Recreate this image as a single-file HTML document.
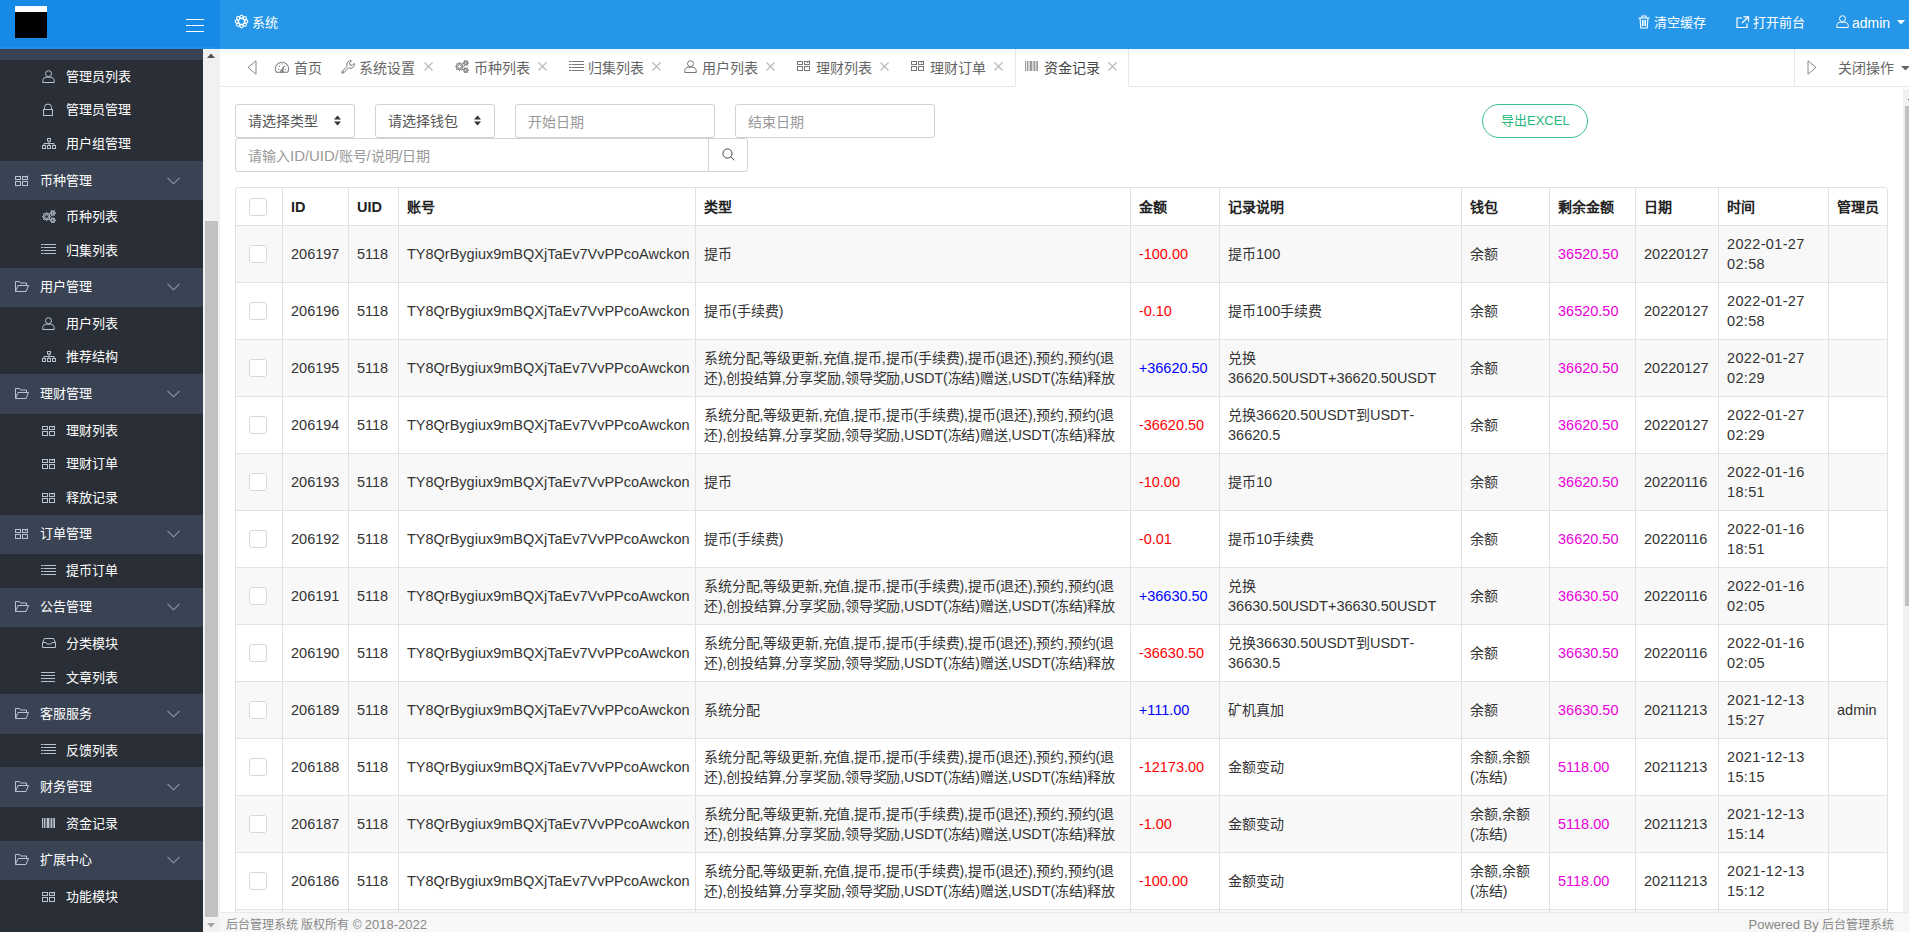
<!DOCTYPE html>
<html lang="zh-CN">
<head>
<meta charset="utf-8">
<style>
*{box-sizing:border-box;margin:0;padding:0}
html,body{width:1909px;height:932px;overflow:hidden;background:#fff;font-family:"Liberation Sans",sans-serif;color:#333}
.abs{position:absolute}
svg.abs{overflow:visible}
.t{position:absolute;white-space:nowrap}
#hl{position:absolute;left:0;top:0;width:220px;height:49px;background:#178ae8}
#hr{position:absolute;left:220px;top:0;width:1689px;height:49px;background:#2697e8}
#logo{position:absolute;left:15px;top:6px;width:32px;height:32px;background:#000;border-top:6px solid #fff}
.hb{position:absolute;left:186px;width:18px;height:1.6px;background:#fff}
#side{position:absolute;left:0;top:49px;width:203px;height:883px;background:#2a2f37}
.grp{position:absolute;left:0;width:203px;height:39.5px;background:#3a4354}
.sd{color:#fff;font-size:13px;line-height:16px}
#ss{position:absolute;left:203px;top:49px;width:17px;height:883px;background:#f1f1f1}
#tabs{position:absolute;left:220px;top:49px;width:1689px;height:38px;background:#fff;border-bottom:1px solid #e6e6e6}
.tb{font-size:14px;color:#666;line-height:16px}
.tx{font-size:15px;color:#bbb;line-height:16px}
#ms{position:absolute;left:1903px;top:89px;width:6px;height:823px;background:#f1f1f1}
#foot{position:absolute;left:220px;top:912px;width:1689px;height:20px;background:#f7f7f7;border-top:1px solid #e9e9e9}
.ft{color:#888;font-size:12px;line-height:14px}
.inp{position:absolute;height:34px;border:1px solid #d2d2d2;border-radius:3px;background:#fff}
.ph{font-size:14px;color:#999;line-height:16px}
.sel{font-size:14px;color:#555;line-height:16px}
#tbl{position:absolute;left:235px;top:187px;width:1653px;height:740px;border-left:1px solid #e2e2e2;border-top:1px solid #e2e2e2;border-top-left-radius:3px;border-top-right-radius:3px;overflow:hidden}
.row{position:absolute;left:0;width:1652px}
.c{position:absolute;top:0;height:100%;border-right:1px solid #e2e2e2;border-bottom:1px solid #e2e2e2}
.cb{position:absolute;width:18px;height:18px;border:1px solid #d8d8d8;border-radius:3px;background:#fff}
.tt{position:absolute;white-space:nowrap;font-size:14px;line-height:20px;color:#333}
.th{font-weight:bold;color:#222}
.lt{letter-spacing:-0.12px}
.dt{letter-spacing:0.35px}
.red{color:#f00}
.blue{color:#00f}
.mag{color:#ec00dc}
</style>
</head>
<body>
<div id="hl">
  <div id="logo"></div>
  <div class="abs" style="left:0;top:47px;width:220px;height:2px;background:#2390e8"></div>
  <div class="hb" style="top:18.5px"></div>
  <div class="hb" style="top:24.5px"></div>
  <div class="hb" style="top:30.5px"></div>
</div>
<div id="hr"></div>
<div id="side"></div>

<div class="grp" style="top:49px;height:11px"></div>
<div class="t sd" style="left:66px;top:68.80px">管理员列表</div>
<svg class="abs" style="left:42px;top:70px" width="13" height="13" viewBox="0 0 13 13" fill="none" stroke="#b8c2d0" stroke-width="1" ><circle cx="6.5" cy="3.7" r="3"/><path d="M0.8 12.5V10.6C0.8 8.6 2.6 7.2 4.3 7.2H8.7C10.4 7.2 12.2 8.6 12.2 10.6V12.5Z"/></svg>
<div class="t sd" style="left:66px;top:102.40px">管理员管理</div>
<svg class="abs" style="left:42px;top:103px" width="12" height="13" viewBox="0 0 12 13" fill="none" stroke="#b8c2d0" stroke-width="1" ><path d="M2.5 6.5V4.5a3.5 3.5 0 0 1 7 0V6.5"/><rect x="1.5" y="6.5" width="9" height="6"/></svg>
<div class="t sd" style="left:66px;top:136.00px">用户组管理</div>
<svg class="abs" style="left:42px;top:138px" width="14" height="11" viewBox="0 0 14 11" fill="none" stroke="#b8c2d0" stroke-width="1" ><rect x="5.5" y="0.5" width="3" height="2.5"/><path d="M7 3V5.5M2 7.5V5.5H12V7.5M7 5.5V7.5"/><rect x="0.5" y="7.5" width="3" height="3"/><rect x="5.5" y="7.5" width="3" height="3"/><rect x="10.5" y="7.5" width="3" height="3"/></svg>
<div class="grp" style="top:160.80px"></div>
<div class="t sd" style="left:40px;top:172.55px">币种管理</div>
<svg class="abs" style="left:15px;top:175px" width="14" height="11" viewBox="0 0 14 11" fill="none" stroke="#b8c2d0" stroke-width="1" ><rect x="0.5" y="1.5" width="5" height="3"/><rect x="7.5" y="1.5" width="5" height="3"/><rect x="0.5" y="6.5" width="5" height="4"/><rect x="7.5" y="6.5" width="5" height="4"/><path d="M10 3L12.5 0.8"/></svg>
<svg class="abs" style="left:167px;top:177px" width="13" height="8" viewBox="0 0 13 8" fill="none" stroke="#8f98a8" stroke-width="1.1" ><path d="M0.5 0.8L6.5 6.8L12.5 0.8"/></svg>
<div class="t sd" style="left:66px;top:209.10px">币种列表</div>
<svg class="abs" style="left:42px;top:210px" width="15" height="13" viewBox="0 0 15 13" fill="none" stroke="#b8c2d0" stroke-width="1" color="#b8c2d0"><circle cx="4.6" cy="6.6" r="1.89"/><circle cx="4.6" cy="6.6" r="3.28"/><circle cx="8.59" cy="6.60" r="0.55" fill="currentColor" stroke="none"/><circle cx="7.42" cy="9.42" r="0.55" fill="currentColor" stroke="none"/><circle cx="4.60" cy="10.59" r="0.55" fill="currentColor" stroke="none"/><circle cx="1.78" cy="9.42" r="0.55" fill="currentColor" stroke="none"/><circle cx="0.61" cy="6.60" r="0.55" fill="currentColor" stroke="none"/><circle cx="1.78" cy="3.78" r="0.55" fill="currentColor" stroke="none"/><circle cx="4.60" cy="2.61" r="0.55" fill="currentColor" stroke="none"/><circle cx="7.42" cy="3.78" r="0.55" fill="currentColor" stroke="none"/><circle cx="10.8" cy="3.0" r="1.26"/><circle cx="10.8" cy="3.0" r="2.18"/><circle cx="13.46" cy="3.00" r="0.50" fill="currentColor" stroke="none"/><circle cx="12.13" cy="5.30" r="0.50" fill="currentColor" stroke="none"/><circle cx="9.47" cy="5.30" r="0.50" fill="currentColor" stroke="none"/><circle cx="8.14" cy="3.00" r="0.50" fill="currentColor" stroke="none"/><circle cx="9.47" cy="0.70" r="0.50" fill="currentColor" stroke="none"/><circle cx="12.13" cy="0.70" r="0.50" fill="currentColor" stroke="none"/><circle cx="10.8" cy="10.2" r="1.26"/><circle cx="10.8" cy="10.2" r="2.18"/><circle cx="13.46" cy="10.20" r="0.50" fill="currentColor" stroke="none"/><circle cx="12.13" cy="12.50" r="0.50" fill="currentColor" stroke="none"/><circle cx="9.47" cy="12.50" r="0.50" fill="currentColor" stroke="none"/><circle cx="8.14" cy="10.20" r="0.50" fill="currentColor" stroke="none"/><circle cx="9.47" cy="7.90" r="0.50" fill="currentColor" stroke="none"/><circle cx="12.13" cy="7.90" r="0.50" fill="currentColor" stroke="none"/></svg>
<div class="t sd" style="left:66px;top:242.70px">归集列表</div>
<svg class="abs" style="left:41px;top:244px" width="15" height="10" viewBox="0 0 15 10" fill="none" stroke="#b8c2d0" stroke-width="1" ><path d="M0 0.5H2.5M0 3.5H2.5M0 6.5H2.5M0 9.5H2.5M3 0.5H15M3 3.5H15M3 6.5H15M3 9.5H15"/></svg>
<div class="grp" style="top:267.50px"></div>
<div class="t sd" style="left:40px;top:279.25px">用户管理</div>
<svg class="abs" style="left:15px;top:281px" width="14" height="11" viewBox="0 0 14 11" fill="none" stroke="#b8c2d0" stroke-width="1" ><path d="M0.5 10.5V0.5H4.5L5.5 2H11.5V4.5"/><path d="M0.5 10.5L3 4.5H13.5L11 10.5Z"/></svg>
<svg class="abs" style="left:167px;top:283px" width="13" height="8" viewBox="0 0 13 8" fill="none" stroke="#8f98a8" stroke-width="1.1" ><path d="M0.5 0.8L6.5 6.8L12.5 0.8"/></svg>
<div class="t sd" style="left:66px;top:315.80px">用户列表</div>
<svg class="abs" style="left:42px;top:317px" width="13" height="13" viewBox="0 0 13 13" fill="none" stroke="#b8c2d0" stroke-width="1" ><circle cx="6.5" cy="3.7" r="3"/><path d="M0.8 12.5V10.6C0.8 8.6 2.6 7.2 4.3 7.2H8.7C10.4 7.2 12.2 8.6 12.2 10.6V12.5Z"/></svg>
<div class="t sd" style="left:66px;top:349.40px">推荐结构</div>
<svg class="abs" style="left:42px;top:351px" width="14" height="11" viewBox="0 0 14 11" fill="none" stroke="#b8c2d0" stroke-width="1" ><rect x="5.5" y="0.5" width="3" height="2.5"/><path d="M7 3V5.5M2 7.5V5.5H12V7.5M7 5.5V7.5"/><rect x="0.5" y="7.5" width="3" height="3"/><rect x="5.5" y="7.5" width="3" height="3"/><rect x="10.5" y="7.5" width="3" height="3"/></svg>
<div class="grp" style="top:374.20px"></div>
<div class="t sd" style="left:40px;top:385.95px">理财管理</div>
<svg class="abs" style="left:15px;top:388px" width="14" height="11" viewBox="0 0 14 11" fill="none" stroke="#b8c2d0" stroke-width="1" ><path d="M0.5 10.5V0.5H4.5L5.5 2H11.5V4.5"/><path d="M0.5 10.5L3 4.5H13.5L11 10.5Z"/></svg>
<svg class="abs" style="left:167px;top:390px" width="13" height="8" viewBox="0 0 13 8" fill="none" stroke="#8f98a8" stroke-width="1.1" ><path d="M0.5 0.8L6.5 6.8L12.5 0.8"/></svg>
<div class="t sd" style="left:66px;top:422.50px">理财列表</div>
<svg class="abs" style="left:42px;top:425px" width="14" height="11" viewBox="0 0 14 11" fill="none" stroke="#b8c2d0" stroke-width="1" ><rect x="0.5" y="1.5" width="5" height="3"/><rect x="7.5" y="1.5" width="5" height="3"/><rect x="0.5" y="6.5" width="5" height="4"/><rect x="7.5" y="6.5" width="5" height="4"/><path d="M10 3L12.5 0.8"/></svg>
<div class="t sd" style="left:66px;top:456.10px">理财订单</div>
<svg class="abs" style="left:42px;top:458px" width="14" height="11" viewBox="0 0 14 11" fill="none" stroke="#b8c2d0" stroke-width="1" ><rect x="0.5" y="1.5" width="5" height="3"/><rect x="7.5" y="1.5" width="5" height="3"/><rect x="0.5" y="6.5" width="5" height="4"/><rect x="7.5" y="6.5" width="5" height="4"/><path d="M10 3L12.5 0.8"/></svg>
<div class="t sd" style="left:66px;top:489.70px">释放记录</div>
<svg class="abs" style="left:42px;top:492px" width="14" height="11" viewBox="0 0 14 11" fill="none" stroke="#b8c2d0" stroke-width="1" ><rect x="0.5" y="1.5" width="5" height="3"/><rect x="7.5" y="1.5" width="5" height="3"/><rect x="0.5" y="6.5" width="5" height="4"/><rect x="7.5" y="6.5" width="5" height="4"/><path d="M10 3L12.5 0.8"/></svg>
<div class="grp" style="top:514.50px"></div>
<div class="t sd" style="left:40px;top:526.25px">订单管理</div>
<svg class="abs" style="left:15px;top:528px" width="14" height="11" viewBox="0 0 14 11" fill="none" stroke="#b8c2d0" stroke-width="1" ><rect x="0.5" y="1.5" width="5" height="3"/><rect x="7.5" y="1.5" width="5" height="3"/><rect x="0.5" y="6.5" width="5" height="4"/><rect x="7.5" y="6.5" width="5" height="4"/><path d="M10 3L12.5 0.8"/></svg>
<svg class="abs" style="left:167px;top:530px" width="13" height="8" viewBox="0 0 13 8" fill="none" stroke="#8f98a8" stroke-width="1.1" ><path d="M0.5 0.8L6.5 6.8L12.5 0.8"/></svg>
<div class="t sd" style="left:66px;top:562.80px">提币订单</div>
<svg class="abs" style="left:41px;top:565px" width="15" height="10" viewBox="0 0 15 10" fill="none" stroke="#b8c2d0" stroke-width="1" ><path d="M0 0.5H2.5M0 3.5H2.5M0 6.5H2.5M0 9.5H2.5M3 0.5H15M3 3.5H15M3 6.5H15M3 9.5H15"/></svg>
<div class="grp" style="top:587.60px"></div>
<div class="t sd" style="left:40px;top:599.35px">公告管理</div>
<svg class="abs" style="left:15px;top:601px" width="14" height="11" viewBox="0 0 14 11" fill="none" stroke="#b8c2d0" stroke-width="1" ><path d="M0.5 10.5V0.5H4.5L5.5 2H11.5V4.5"/><path d="M0.5 10.5L3 4.5H13.5L11 10.5Z"/></svg>
<svg class="abs" style="left:167px;top:603px" width="13" height="8" viewBox="0 0 13 8" fill="none" stroke="#8f98a8" stroke-width="1.1" ><path d="M0.5 0.8L6.5 6.8L12.5 0.8"/></svg>
<div class="t sd" style="left:66px;top:635.90px">分类模块</div>
<svg class="abs" style="left:42px;top:638px" width="14" height="10" viewBox="0 0 14 10" fill="none" stroke="#b8c2d0" stroke-width="1" ><path d="M0.5 4.5L2.5 0.5H11.5L13.5 4.5V9.5H0.5Z"/><path d="M0.5 4.5H4L5 6H9L10 4.5H13.5"/></svg>
<div class="t sd" style="left:66px;top:669.50px">文章列表</div>
<svg class="abs" style="left:41px;top:672px" width="14" height="10" viewBox="0 0 14 10" fill="none" stroke="#b8c2d0" stroke-width="1" ><path d="M0 0.5H14M0 3.5H14M0 6.5H14M0 9.5H14"/></svg>
<div class="grp" style="top:694.30px"></div>
<div class="t sd" style="left:40px;top:706.05px">客服服务</div>
<svg class="abs" style="left:15px;top:708px" width="14" height="11" viewBox="0 0 14 11" fill="none" stroke="#b8c2d0" stroke-width="1" ><path d="M0.5 10.5V0.5H4.5L5.5 2H11.5V4.5"/><path d="M0.5 10.5L3 4.5H13.5L11 10.5Z"/></svg>
<svg class="abs" style="left:167px;top:710px" width="13" height="8" viewBox="0 0 13 8" fill="none" stroke="#8f98a8" stroke-width="1.1" ><path d="M0.5 0.8L6.5 6.8L12.5 0.8"/></svg>
<div class="t sd" style="left:66px;top:742.60px">反馈列表</div>
<svg class="abs" style="left:41px;top:744px" width="15" height="10" viewBox="0 0 15 10" fill="none" stroke="#b8c2d0" stroke-width="1" ><path d="M0 0.5H2.5M0 3.5H2.5M0 6.5H2.5M0 9.5H2.5M3 0.5H15M3 3.5H15M3 6.5H15M3 9.5H15"/></svg>
<div class="grp" style="top:767.40px"></div>
<div class="t sd" style="left:40px;top:779.15px">财务管理</div>
<svg class="abs" style="left:15px;top:781px" width="14" height="11" viewBox="0 0 14 11" fill="none" stroke="#b8c2d0" stroke-width="1" ><path d="M0.5 10.5V0.5H4.5L5.5 2H11.5V4.5"/><path d="M0.5 10.5L3 4.5H13.5L11 10.5Z"/></svg>
<svg class="abs" style="left:167px;top:783px" width="13" height="8" viewBox="0 0 13 8" fill="none" stroke="#8f98a8" stroke-width="1.1" ><path d="M0.5 0.8L6.5 6.8L12.5 0.8"/></svg>
<div class="t sd" style="left:66px;top:815.70px">资金记录</div>
<svg class="abs" style="left:42px;top:818px" width="13" height="10" viewBox="0 0 13 10" fill="#b8c2d0" stroke="none" stroke-width="1" ><rect x="0" y="0" width="1" height="10"/><rect x="1.8" y="0" width="1.2" height="10"/><rect x="3.6" y="0" width="0.8" height="10"/><rect x="5" y="0" width="2" height="10"/><rect x="7.6" y="0" width="0.9" height="10"/><rect x="9" y="0" width="1.3" height="10"/><rect x="10.9" y="0" width="0.8" height="10"/><rect x="12" y="0" width="1" height="10"/></svg>
<div class="grp" style="top:840.50px"></div>
<div class="t sd" style="left:40px;top:852.25px">扩展中心</div>
<svg class="abs" style="left:15px;top:854px" width="14" height="11" viewBox="0 0 14 11" fill="none" stroke="#b8c2d0" stroke-width="1" ><path d="M0.5 10.5V0.5H4.5L5.5 2H11.5V4.5"/><path d="M0.5 10.5L3 4.5H13.5L11 10.5Z"/></svg>
<svg class="abs" style="left:167px;top:856px" width="13" height="8" viewBox="0 0 13 8" fill="none" stroke="#8f98a8" stroke-width="1.1" ><path d="M0.5 0.8L6.5 6.8L12.5 0.8"/></svg>
<div class="t sd" style="left:66px;top:888.80px">功能模块</div>
<svg class="abs" style="left:42px;top:891px" width="14" height="11" viewBox="0 0 14 11" fill="none" stroke="#b8c2d0" stroke-width="1" ><rect x="0.5" y="1.5" width="5" height="3"/><rect x="7.5" y="1.5" width="5" height="3"/><rect x="0.5" y="6.5" width="5" height="4"/><rect x="7.5" y="6.5" width="5" height="4"/><path d="M10 3L12.5 0.8"/></svg>
<div id="ss"></div>
<div class="abs" style="left:205px;top:221px;width:13px;height:696px;background:#c1c1c1"></div>
<svg class="abs" style="left:207px;top:53px" width="8" height="5" viewBox="0 0 8 5" fill="#505050" stroke="none" stroke-width="1" ><path d="M0 5L4 0.5L8 5z"/></svg>
<svg class="abs" style="left:207px;top:923px" width="8" height="5" viewBox="0 0 8 5" fill="#a3a3a3" stroke="none" stroke-width="1" ><path d="M0 0L4 4.5L8 0z"/></svg>
<svg class="abs" style="left:235px;top:15px" width="13" height="13" viewBox="0 0 13 13" fill="none" stroke="#fff" stroke-width="1.1" ><circle cx="6.5" cy="6.5" r="3"/><circle cx="11.20" cy="6.50" r="1.6"/><circle cx="9.82" cy="9.82" r="1.6"/><circle cx="6.50" cy="11.20" r="1.6"/><circle cx="3.18" cy="9.82" r="1.6"/><circle cx="1.80" cy="6.50" r="1.6"/><circle cx="3.18" cy="3.18" r="1.6"/><circle cx="6.50" cy="1.80" r="1.6"/><circle cx="9.82" cy="3.18" r="1.6"/></svg>
<div class="t" style="left:252px;top:15px;color:#fff;font-size:13px;line-height:16px">系统</div>
<svg class="abs" style="left:1638px;top:15px" width="12" height="14" viewBox="0 0 12 14" fill="none" stroke="#fff" stroke-width="1.1" ><path d="M0.5 3h11M4 3V1h4v2M2 3l0.8 10h6.4L10 3M4.5 5v6M6 5v6M7.5 5v6"/></svg>
<div class="t" style="left:1654px;top:15px;color:#fff;font-size:13px;line-height:16px">清空缓存</div>
<svg class="abs" style="left:1736px;top:16px" width="14" height="12" viewBox="0 0 14 12" fill="none" stroke="#fff" stroke-width="1.2" ><path d="M6 2H1v9.5h10V7.5M7.5 0.8h5v5M12.5 0.8L6 7"/></svg>
<div class="t" style="left:1753px;top:15px;color:#fff;font-size:13px;line-height:16px">打开前台</div>
<svg class="abs" style="left:1836px;top:15px" width="13" height="13" viewBox="0 0 13 13" fill="none" stroke="#fff" stroke-width="1" ><circle cx="6.5" cy="3.7" r="3"/><path d="M0.8 12.5V10.6C0.8 8.6 2.6 7.2 4.3 7.2H8.7C10.4 7.2 12.2 8.6 12.2 10.6V12.5Z"/></svg>
<div class="t" style="left:1852px;top:14.5px;color:#fff;font-size:14px;line-height:16px">admin</div>
<svg class="abs" style="left:1897px;top:20px" width="8" height="5" viewBox="0 0 8 5" fill="#fff" stroke="none" stroke-width="1" ><path d="M0 0h8L4 4.5z"/></svg>
<div id="tabs"></div>
<svg class="abs" style="left:247px;top:60px" width="10" height="15" viewBox="0 0 10 15" fill="none" stroke="#888" stroke-width="1" ><path d="M9 0.8L1 7.5L9 14.2z"/></svg>
<div class="t tb" style="left:294px;top:60px">首页</div>
<svg class="abs" style="left:275px;top:60.5px" width="14" height="12" viewBox="0 0 14 12" fill="none" stroke="#777" stroke-width="1.1" ><path d="M1.3 11.2A6.6 6.6 0 1 1 12.7 11.2z"/><path d="M7 10.5L8.6 5.5" stroke-width="1.4"/><circle cx="7" cy="10" r="1.3"/><path d="M3 8.5h1M11 8.5h-1M4 4.8l0.8 0.8M10 4.8l-0.8 0.8M7 2.6v1"/></svg>
<div class="t tb" style="left:359px;top:60px">系统设置</div>
<svg class="abs" style="left:341px;top:60px" width="14" height="14" viewBox="0 0 14 14" fill="none" stroke="#777" stroke-width="1" ><path d="M0.9 11.6L6.2 6.3A3.8 3.8 0 0 1 10.6 0.8L8.6 2.8L9 5L11.2 5.4L13.2 3.4A3.8 3.8 0 0 1 7.7 7.8L2.4 13.1A1.06 1.06 0 0 1 0.9 11.6z"/><circle cx="2" cy="12" r="0.5"/></svg>
<svg class="abs" style="left:424px;top:62px" width="9" height="9" viewBox="0 0 9 9" fill="none" stroke="#bbb" stroke-width="1.3" ><path d="M0.5 0.5L8.5 8.5M8.5 0.5L0.5 8.5"/></svg>
<div class="t tb" style="left:474px;top:60px">币种列表</div>
<svg class="abs" style="left:455px;top:60px" width="15" height="13" viewBox="0 0 15 13" fill="none" stroke="#777" stroke-width="1" color="#777"><circle cx="4.6" cy="6.6" r="1.89"/><circle cx="4.6" cy="6.6" r="3.28"/><circle cx="8.59" cy="6.60" r="0.55" fill="currentColor" stroke="none"/><circle cx="7.42" cy="9.42" r="0.55" fill="currentColor" stroke="none"/><circle cx="4.60" cy="10.59" r="0.55" fill="currentColor" stroke="none"/><circle cx="1.78" cy="9.42" r="0.55" fill="currentColor" stroke="none"/><circle cx="0.61" cy="6.60" r="0.55" fill="currentColor" stroke="none"/><circle cx="1.78" cy="3.78" r="0.55" fill="currentColor" stroke="none"/><circle cx="4.60" cy="2.61" r="0.55" fill="currentColor" stroke="none"/><circle cx="7.42" cy="3.78" r="0.55" fill="currentColor" stroke="none"/><circle cx="10.8" cy="3.0" r="1.26"/><circle cx="10.8" cy="3.0" r="2.18"/><circle cx="13.46" cy="3.00" r="0.50" fill="currentColor" stroke="none"/><circle cx="12.13" cy="5.30" r="0.50" fill="currentColor" stroke="none"/><circle cx="9.47" cy="5.30" r="0.50" fill="currentColor" stroke="none"/><circle cx="8.14" cy="3.00" r="0.50" fill="currentColor" stroke="none"/><circle cx="9.47" cy="0.70" r="0.50" fill="currentColor" stroke="none"/><circle cx="12.13" cy="0.70" r="0.50" fill="currentColor" stroke="none"/><circle cx="10.8" cy="10.2" r="1.26"/><circle cx="10.8" cy="10.2" r="2.18"/><circle cx="13.46" cy="10.20" r="0.50" fill="currentColor" stroke="none"/><circle cx="12.13" cy="12.50" r="0.50" fill="currentColor" stroke="none"/><circle cx="9.47" cy="12.50" r="0.50" fill="currentColor" stroke="none"/><circle cx="8.14" cy="10.20" r="0.50" fill="currentColor" stroke="none"/><circle cx="9.47" cy="7.90" r="0.50" fill="currentColor" stroke="none"/><circle cx="12.13" cy="7.90" r="0.50" fill="currentColor" stroke="none"/></svg>
<svg class="abs" style="left:538px;top:62px" width="9" height="9" viewBox="0 0 9 9" fill="none" stroke="#bbb" stroke-width="1.3" ><path d="M0.5 0.5L8.5 8.5M8.5 0.5L0.5 8.5"/></svg>
<div class="t tb" style="left:588px;top:60px">归集列表</div>
<svg class="abs" style="left:569px;top:61px" width="15" height="10" viewBox="0 0 15 10" fill="none" stroke="#777" stroke-width="1" ><path d="M0 0.5H2.5M0 3.5H2.5M0 6.5H2.5M0 9.5H2.5M3 0.5H15M3 3.5H15M3 6.5H15M3 9.5H15"/></svg>
<svg class="abs" style="left:652px;top:62px" width="9" height="9" viewBox="0 0 9 9" fill="none" stroke="#bbb" stroke-width="1.3" ><path d="M0.5 0.5L8.5 8.5M8.5 0.5L0.5 8.5"/></svg>
<div class="t tb" style="left:702px;top:60px">用户列表</div>
<svg class="abs" style="left:684px;top:60px" width="13" height="13" viewBox="0 0 13 13" fill="none" stroke="#777" stroke-width="1" ><circle cx="6.5" cy="3.7" r="3"/><path d="M0.8 12.5V10.6C0.8 8.6 2.6 7.2 4.3 7.2H8.7C10.4 7.2 12.2 8.6 12.2 10.6V12.5Z"/></svg>
<svg class="abs" style="left:766px;top:62px" width="9" height="9" viewBox="0 0 9 9" fill="none" stroke="#bbb" stroke-width="1.3" ><path d="M0.5 0.5L8.5 8.5M8.5 0.5L0.5 8.5"/></svg>
<div class="t tb" style="left:816px;top:60px">理财列表</div>
<svg class="abs" style="left:797px;top:60px" width="14" height="11" viewBox="0 0 14 11" fill="none" stroke="#777" stroke-width="1" ><rect x="0.5" y="1.5" width="5" height="3"/><rect x="7.5" y="1.5" width="5" height="3"/><rect x="0.5" y="6.5" width="5" height="4"/><rect x="7.5" y="6.5" width="5" height="4"/><path d="M10 3L12.5 0.8"/></svg>
<svg class="abs" style="left:880px;top:62px" width="9" height="9" viewBox="0 0 9 9" fill="none" stroke="#bbb" stroke-width="1.3" ><path d="M0.5 0.5L8.5 8.5M8.5 0.5L0.5 8.5"/></svg>
<div class="t tb" style="left:930px;top:60px">理财订单</div>
<svg class="abs" style="left:911px;top:60px" width="14" height="11" viewBox="0 0 14 11" fill="none" stroke="#777" stroke-width="1" ><rect x="0.5" y="1.5" width="5" height="3"/><rect x="7.5" y="1.5" width="5" height="3"/><rect x="0.5" y="6.5" width="5" height="4"/><rect x="7.5" y="6.5" width="5" height="4"/><path d="M10 3L12.5 0.8"/></svg>
<svg class="abs" style="left:994px;top:62px" width="9" height="9" viewBox="0 0 9 9" fill="none" stroke="#bbb" stroke-width="1.3" ><path d="M0.5 0.5L8.5 8.5M8.5 0.5L0.5 8.5"/></svg>
<div class="abs" style="left:1015px;top:49px;width:114px;height:38px;background:#fff;border-left:1px solid #e6e6e6;border-right:1px solid #e6e6e6"></div>
<svg class="abs" style="left:1025px;top:61px" width="13" height="10" viewBox="0 0 13 10" fill="#9a9a9a" stroke="none" stroke-width="1" ><rect x="0" y="0" width="1" height="10"/><rect x="1.8" y="0" width="1.2" height="10"/><rect x="3.6" y="0" width="0.8" height="10"/><rect x="5" y="0" width="2" height="10"/><rect x="7.6" y="0" width="0.9" height="10"/><rect x="9" y="0" width="1.3" height="10"/><rect x="10.9" y="0" width="0.8" height="10"/><rect x="12" y="0" width="1" height="10"/></svg>
<div class="t tb" style="left:1044px;top:60px;color:#444">资金记录</div>
<svg class="abs" style="left:1108px;top:62px" width="9" height="9" viewBox="0 0 9 9" fill="none" stroke="#bbb" stroke-width="1.3" ><path d="M0.5 0.5L8.5 8.5M8.5 0.5L0.5 8.5"/></svg>
<div class="abs" style="left:1794px;top:49px;width:1px;height:37px;background:#e6e6e6"></div>
<svg class="abs" style="left:1807px;top:60px" width="10" height="15" viewBox="0 0 10 15" fill="none" stroke="#888" stroke-width="1" ><path d="M1 0.8L9 7.5L1 14.2z"/></svg>
<div class="t tb" style="left:1838px;top:60px">关闭操作</div>
<svg class="abs" style="left:1901px;top:66px" width="9" height="5" viewBox="0 0 9 5" fill="#666" stroke="none" stroke-width="1" ><path d="M0 0h9L4.5 4.5z"/></svg>
<div class="inp" style="left:235px;top:104px;width:120px"></div>
<div class="t sel" style="left:248px;top:113px">请选择类型</div>
<svg class="abs" style="left:334px;top:115px" width="7" height="11" viewBox="0 0 7 11" fill="#333" stroke="none" stroke-width="1" ><path d="M0 4.5L3.5 0.5L7 4.5zM0 6.5L3.5 10.5L7 6.5z"/></svg>
<div class="inp" style="left:375px;top:104px;width:120px"></div>
<div class="t sel" style="left:388px;top:113px">请选择钱包</div>
<svg class="abs" style="left:474px;top:115px" width="7" height="11" viewBox="0 0 7 11" fill="#333" stroke="none" stroke-width="1" ><path d="M0 4.5L3.5 0.5L7 4.5zM0 6.5L3.5 10.5L7 6.5z"/></svg>
<div class="inp" style="left:515px;top:104px;width:200px"></div>
<div class="t ph" style="left:528px;top:114px">开始日期</div>
<div class="inp" style="left:735px;top:104px;width:200px"></div>
<div class="t ph" style="left:748px;top:114px">结束日期</div>
<div class="inp" style="left:235px;top:138px;width:475px;border-radius:3px 0 0 3px"></div>
<div class="t ph" style="left:248px;top:148px">请输入<span style="font-size:15px">ID</span>/<span style="font-size:15px">UID</span>/账号/说明/日期</div>
<div class="inp" style="left:708px;top:138px;width:40px;border-radius:0 3px 3px 0"></div>
<svg class="abs" style="left:722px;top:148px" width="13" height="13" viewBox="0 0 13 13" fill="none" stroke="#444" stroke-width="1" ><circle cx="5.5" cy="5.5" r="4.6"/><path d="M8.8 8.8l3.5 3.5"/></svg>
<div class="abs" style="left:1482px;top:104px;width:106px;height:34px;border:1px solid #3cc08a;border-radius:17px"></div>
<div class="t" style="left:1501px;top:113px;font-size:13px;line-height:16px;color:#25b87a">导出EXCEL</div>
<div id="tbl">
<div class="row" style="top:0;height:38px"><div class="c" style="left:0px;width:47px;background:#fff"></div><div class="c" style="left:47px;width:66px;background:#fff"></div><div class="c" style="left:113px;width:50px;background:#fff"></div><div class="c" style="left:163px;width:297px;background:#fff"></div><div class="c" style="left:460px;width:435px;background:#fff"></div><div class="c" style="left:895px;width:89px;background:#fff"></div><div class="c" style="left:984px;width:242px;background:#fff"></div><div class="c" style="left:1226px;width:88px;background:#fff"></div><div class="c" style="left:1314px;width:86px;background:#fff"></div><div class="c" style="left:1400px;width:83px;background:#fff"></div><div class="c" style="left:1483px;width:110px;background:#fff"></div><div class="c" style="left:1593px;width:59px;background:#fff"></div>
<div class="cb" style="left:13px;top:10px"></div>
<div class="tt th" style="left:55px;top:8.5px"><span style="font-size:14.5px">ID</span></div>
<div class="tt th" style="left:121px;top:8.5px"><span style="font-size:14.5px">UID</span></div>
<div class="tt th" style="left:171px;top:8.5px">账号</div>
<div class="tt th" style="left:468px;top:8.5px">类型</div>
<div class="tt th" style="left:903px;top:8.5px">金额</div>
<div class="tt th" style="left:992px;top:8.5px">记录说明</div>
<div class="tt th" style="left:1234px;top:8.5px">钱包</div>
<div class="tt th" style="left:1322px;top:8.5px">剩余金额</div>
<div class="tt th" style="left:1408px;top:8.5px">日期</div>
<div class="tt th" style="left:1491px;top:8.5px">时间</div>
<div class="tt th" style="left:1601px;top:8.5px">管理员</div>
</div>
<div class="row" style="top:38px;height:57px"><div class="c" style="left:0px;width:47px;background:#f8f8f8"></div><div class="c" style="left:47px;width:66px;background:#f8f8f8"></div><div class="c" style="left:113px;width:50px;background:#f8f8f8"></div><div class="c" style="left:163px;width:297px;background:#f8f8f8"></div><div class="c" style="left:460px;width:435px;background:#f8f8f8"></div><div class="c" style="left:895px;width:89px;background:#f8f8f8"></div><div class="c" style="left:984px;width:242px;background:#f8f8f8"></div><div class="c" style="left:1226px;width:88px;background:#f8f8f8"></div><div class="c" style="left:1314px;width:86px;background:#f8f8f8"></div><div class="c" style="left:1400px;width:83px;background:#f8f8f8"></div><div class="c" style="left:1483px;width:110px;background:#f8f8f8"></div><div class="c" style="left:1593px;width:59px;background:#f8f8f8"></div>
<div class="cb" style="left:13px;top:19.0px"></div>
<div class="tt " style="left:55px;top:18.0px"><span style="font-size:14.5px">206197</span></div>
<div class="tt " style="left:121px;top:18.0px"><span style="font-size:14.5px">5118</span></div>
<div class="tt " style="left:171px;top:18.0px"><span style="font-size:14.5px">TY8QrBygiux9mBQXjTaEv7VvPPcoAwckon</span></div>
<div class="tt " style="left:468px;top:18.0px">提币</div>
<div class="tt red" style="left:903px;top:18.0px">-<span style="font-size:14.5px">100.00</span></div>
<div class="tt " style="left:992px;top:18.0px">提币<span style="font-size:14.5px">100</span></div>
<div class="tt " style="left:1234px;top:18.0px">余额</div>
<div class="tt mag" style="left:1322px;top:18.0px"><span style="font-size:14.5px">36520.50</span></div>
<div class="tt " style="left:1408px;top:18.0px"><span style="font-size:14.5px">20220127</span></div>
<div class="tt dt" style="left:1491px;top:8.0px"><span style="font-size:14.5px">2022-01-27</span><br><span style="font-size:14.5px">02:58</span></div>
</div>
<div class="row" style="top:95px;height:57px"><div class="c" style="left:0px;width:47px;background:#fff"></div><div class="c" style="left:47px;width:66px;background:#fff"></div><div class="c" style="left:113px;width:50px;background:#fff"></div><div class="c" style="left:163px;width:297px;background:#fff"></div><div class="c" style="left:460px;width:435px;background:#fff"></div><div class="c" style="left:895px;width:89px;background:#fff"></div><div class="c" style="left:984px;width:242px;background:#fff"></div><div class="c" style="left:1226px;width:88px;background:#fff"></div><div class="c" style="left:1314px;width:86px;background:#fff"></div><div class="c" style="left:1400px;width:83px;background:#fff"></div><div class="c" style="left:1483px;width:110px;background:#fff"></div><div class="c" style="left:1593px;width:59px;background:#fff"></div>
<div class="cb" style="left:13px;top:19.0px"></div>
<div class="tt " style="left:55px;top:18.0px"><span style="font-size:14.5px">206196</span></div>
<div class="tt " style="left:121px;top:18.0px"><span style="font-size:14.5px">5118</span></div>
<div class="tt " style="left:171px;top:18.0px"><span style="font-size:14.5px">TY8QrBygiux9mBQXjTaEv7VvPPcoAwckon</span></div>
<div class="tt " style="left:468px;top:18.0px">提币(手续费)</div>
<div class="tt red" style="left:903px;top:18.0px">-<span style="font-size:14.5px">0.10</span></div>
<div class="tt " style="left:992px;top:18.0px">提币<span style="font-size:14.5px">100</span>手续费</div>
<div class="tt " style="left:1234px;top:18.0px">余额</div>
<div class="tt mag" style="left:1322px;top:18.0px"><span style="font-size:14.5px">36520.50</span></div>
<div class="tt " style="left:1408px;top:18.0px"><span style="font-size:14.5px">20220127</span></div>
<div class="tt dt" style="left:1491px;top:8.0px"><span style="font-size:14.5px">2022-01-27</span><br><span style="font-size:14.5px">02:58</span></div>
</div>
<div class="row" style="top:152px;height:57px"><div class="c" style="left:0px;width:47px;background:#f8f8f8"></div><div class="c" style="left:47px;width:66px;background:#f8f8f8"></div><div class="c" style="left:113px;width:50px;background:#f8f8f8"></div><div class="c" style="left:163px;width:297px;background:#f8f8f8"></div><div class="c" style="left:460px;width:435px;background:#f8f8f8"></div><div class="c" style="left:895px;width:89px;background:#f8f8f8"></div><div class="c" style="left:984px;width:242px;background:#f8f8f8"></div><div class="c" style="left:1226px;width:88px;background:#f8f8f8"></div><div class="c" style="left:1314px;width:86px;background:#f8f8f8"></div><div class="c" style="left:1400px;width:83px;background:#f8f8f8"></div><div class="c" style="left:1483px;width:110px;background:#f8f8f8"></div><div class="c" style="left:1593px;width:59px;background:#f8f8f8"></div>
<div class="cb" style="left:13px;top:19.0px"></div>
<div class="tt " style="left:55px;top:18.0px"><span style="font-size:14.5px">206195</span></div>
<div class="tt " style="left:121px;top:18.0px"><span style="font-size:14.5px">5118</span></div>
<div class="tt " style="left:171px;top:18.0px"><span style="font-size:14.5px">TY8QrBygiux9mBQXjTaEv7VvPPcoAwckon</span></div>
<div class="tt lt" style="left:468px;top:8.0px">系统分配,等级更新,充值,提币,提币(手续费),提币(退还),预约,预约(退<br>还),创投结算,分享奖励,领导奖励,<span style="font-size:14.5px">USDT</span>(冻结)赠送,<span style="font-size:14.5px">USDT</span>(冻结)释放</div>
<div class="tt blue" style="left:903px;top:18.0px">+<span style="font-size:14.5px">36620.50</span></div>
<div class="tt " style="left:992px;top:8.0px">兑换<br><span style="font-size:14.5px">36620.50USDT+36620.50USDT</span></div>
<div class="tt " style="left:1234px;top:18.0px">余额</div>
<div class="tt mag" style="left:1322px;top:18.0px"><span style="font-size:14.5px">36620.50</span></div>
<div class="tt " style="left:1408px;top:18.0px"><span style="font-size:14.5px">20220127</span></div>
<div class="tt dt" style="left:1491px;top:8.0px"><span style="font-size:14.5px">2022-01-27</span><br><span style="font-size:14.5px">02:29</span></div>
</div>
<div class="row" style="top:209px;height:57px"><div class="c" style="left:0px;width:47px;background:#fff"></div><div class="c" style="left:47px;width:66px;background:#fff"></div><div class="c" style="left:113px;width:50px;background:#fff"></div><div class="c" style="left:163px;width:297px;background:#fff"></div><div class="c" style="left:460px;width:435px;background:#fff"></div><div class="c" style="left:895px;width:89px;background:#fff"></div><div class="c" style="left:984px;width:242px;background:#fff"></div><div class="c" style="left:1226px;width:88px;background:#fff"></div><div class="c" style="left:1314px;width:86px;background:#fff"></div><div class="c" style="left:1400px;width:83px;background:#fff"></div><div class="c" style="left:1483px;width:110px;background:#fff"></div><div class="c" style="left:1593px;width:59px;background:#fff"></div>
<div class="cb" style="left:13px;top:19.0px"></div>
<div class="tt " style="left:55px;top:18.0px"><span style="font-size:14.5px">206194</span></div>
<div class="tt " style="left:121px;top:18.0px"><span style="font-size:14.5px">5118</span></div>
<div class="tt " style="left:171px;top:18.0px"><span style="font-size:14.5px">TY8QrBygiux9mBQXjTaEv7VvPPcoAwckon</span></div>
<div class="tt lt" style="left:468px;top:8.0px">系统分配,等级更新,充值,提币,提币(手续费),提币(退还),预约,预约(退<br>还),创投结算,分享奖励,领导奖励,<span style="font-size:14.5px">USDT</span>(冻结)赠送,<span style="font-size:14.5px">USDT</span>(冻结)释放</div>
<div class="tt red" style="left:903px;top:18.0px">-<span style="font-size:14.5px">36620.50</span></div>
<div class="tt " style="left:992px;top:8.0px">兑换<span style="font-size:14.5px">36620.50USDT</span>到<span style="font-size:14.5px">USDT</span>-<br><span style="font-size:14.5px">36620.5</span></div>
<div class="tt " style="left:1234px;top:18.0px">余额</div>
<div class="tt mag" style="left:1322px;top:18.0px"><span style="font-size:14.5px">36620.50</span></div>
<div class="tt " style="left:1408px;top:18.0px"><span style="font-size:14.5px">20220127</span></div>
<div class="tt dt" style="left:1491px;top:8.0px"><span style="font-size:14.5px">2022-01-27</span><br><span style="font-size:14.5px">02:29</span></div>
</div>
<div class="row" style="top:266px;height:57px"><div class="c" style="left:0px;width:47px;background:#f8f8f8"></div><div class="c" style="left:47px;width:66px;background:#f8f8f8"></div><div class="c" style="left:113px;width:50px;background:#f8f8f8"></div><div class="c" style="left:163px;width:297px;background:#f8f8f8"></div><div class="c" style="left:460px;width:435px;background:#f8f8f8"></div><div class="c" style="left:895px;width:89px;background:#f8f8f8"></div><div class="c" style="left:984px;width:242px;background:#f8f8f8"></div><div class="c" style="left:1226px;width:88px;background:#f8f8f8"></div><div class="c" style="left:1314px;width:86px;background:#f8f8f8"></div><div class="c" style="left:1400px;width:83px;background:#f8f8f8"></div><div class="c" style="left:1483px;width:110px;background:#f8f8f8"></div><div class="c" style="left:1593px;width:59px;background:#f8f8f8"></div>
<div class="cb" style="left:13px;top:19.0px"></div>
<div class="tt " style="left:55px;top:18.0px"><span style="font-size:14.5px">206193</span></div>
<div class="tt " style="left:121px;top:18.0px"><span style="font-size:14.5px">5118</span></div>
<div class="tt " style="left:171px;top:18.0px"><span style="font-size:14.5px">TY8QrBygiux9mBQXjTaEv7VvPPcoAwckon</span></div>
<div class="tt " style="left:468px;top:18.0px">提币</div>
<div class="tt red" style="left:903px;top:18.0px">-<span style="font-size:14.5px">10.00</span></div>
<div class="tt " style="left:992px;top:18.0px">提币<span style="font-size:14.5px">10</span></div>
<div class="tt " style="left:1234px;top:18.0px">余额</div>
<div class="tt mag" style="left:1322px;top:18.0px"><span style="font-size:14.5px">36620.50</span></div>
<div class="tt " style="left:1408px;top:18.0px"><span style="font-size:14.5px">20220116</span></div>
<div class="tt dt" style="left:1491px;top:8.0px"><span style="font-size:14.5px">2022-01-16</span><br><span style="font-size:14.5px">18:51</span></div>
</div>
<div class="row" style="top:323px;height:57px"><div class="c" style="left:0px;width:47px;background:#fff"></div><div class="c" style="left:47px;width:66px;background:#fff"></div><div class="c" style="left:113px;width:50px;background:#fff"></div><div class="c" style="left:163px;width:297px;background:#fff"></div><div class="c" style="left:460px;width:435px;background:#fff"></div><div class="c" style="left:895px;width:89px;background:#fff"></div><div class="c" style="left:984px;width:242px;background:#fff"></div><div class="c" style="left:1226px;width:88px;background:#fff"></div><div class="c" style="left:1314px;width:86px;background:#fff"></div><div class="c" style="left:1400px;width:83px;background:#fff"></div><div class="c" style="left:1483px;width:110px;background:#fff"></div><div class="c" style="left:1593px;width:59px;background:#fff"></div>
<div class="cb" style="left:13px;top:19.0px"></div>
<div class="tt " style="left:55px;top:18.0px"><span style="font-size:14.5px">206192</span></div>
<div class="tt " style="left:121px;top:18.0px"><span style="font-size:14.5px">5118</span></div>
<div class="tt " style="left:171px;top:18.0px"><span style="font-size:14.5px">TY8QrBygiux9mBQXjTaEv7VvPPcoAwckon</span></div>
<div class="tt " style="left:468px;top:18.0px">提币(手续费)</div>
<div class="tt red" style="left:903px;top:18.0px">-<span style="font-size:14.5px">0.01</span></div>
<div class="tt " style="left:992px;top:18.0px">提币<span style="font-size:14.5px">10</span>手续费</div>
<div class="tt " style="left:1234px;top:18.0px">余额</div>
<div class="tt mag" style="left:1322px;top:18.0px"><span style="font-size:14.5px">36620.50</span></div>
<div class="tt " style="left:1408px;top:18.0px"><span style="font-size:14.5px">20220116</span></div>
<div class="tt dt" style="left:1491px;top:8.0px"><span style="font-size:14.5px">2022-01-16</span><br><span style="font-size:14.5px">18:51</span></div>
</div>
<div class="row" style="top:380px;height:57px"><div class="c" style="left:0px;width:47px;background:#f8f8f8"></div><div class="c" style="left:47px;width:66px;background:#f8f8f8"></div><div class="c" style="left:113px;width:50px;background:#f8f8f8"></div><div class="c" style="left:163px;width:297px;background:#f8f8f8"></div><div class="c" style="left:460px;width:435px;background:#f8f8f8"></div><div class="c" style="left:895px;width:89px;background:#f8f8f8"></div><div class="c" style="left:984px;width:242px;background:#f8f8f8"></div><div class="c" style="left:1226px;width:88px;background:#f8f8f8"></div><div class="c" style="left:1314px;width:86px;background:#f8f8f8"></div><div class="c" style="left:1400px;width:83px;background:#f8f8f8"></div><div class="c" style="left:1483px;width:110px;background:#f8f8f8"></div><div class="c" style="left:1593px;width:59px;background:#f8f8f8"></div>
<div class="cb" style="left:13px;top:19.0px"></div>
<div class="tt " style="left:55px;top:18.0px"><span style="font-size:14.5px">206191</span></div>
<div class="tt " style="left:121px;top:18.0px"><span style="font-size:14.5px">5118</span></div>
<div class="tt " style="left:171px;top:18.0px"><span style="font-size:14.5px">TY8QrBygiux9mBQXjTaEv7VvPPcoAwckon</span></div>
<div class="tt lt" style="left:468px;top:8.0px">系统分配,等级更新,充值,提币,提币(手续费),提币(退还),预约,预约(退<br>还),创投结算,分享奖励,领导奖励,<span style="font-size:14.5px">USDT</span>(冻结)赠送,<span style="font-size:14.5px">USDT</span>(冻结)释放</div>
<div class="tt blue" style="left:903px;top:18.0px">+<span style="font-size:14.5px">36630.50</span></div>
<div class="tt " style="left:992px;top:8.0px">兑换<br><span style="font-size:14.5px">36630.50USDT+36630.50USDT</span></div>
<div class="tt " style="left:1234px;top:18.0px">余额</div>
<div class="tt mag" style="left:1322px;top:18.0px"><span style="font-size:14.5px">36630.50</span></div>
<div class="tt " style="left:1408px;top:18.0px"><span style="font-size:14.5px">20220116</span></div>
<div class="tt dt" style="left:1491px;top:8.0px"><span style="font-size:14.5px">2022-01-16</span><br><span style="font-size:14.5px">02:05</span></div>
</div>
<div class="row" style="top:437px;height:57px"><div class="c" style="left:0px;width:47px;background:#fff"></div><div class="c" style="left:47px;width:66px;background:#fff"></div><div class="c" style="left:113px;width:50px;background:#fff"></div><div class="c" style="left:163px;width:297px;background:#fff"></div><div class="c" style="left:460px;width:435px;background:#fff"></div><div class="c" style="left:895px;width:89px;background:#fff"></div><div class="c" style="left:984px;width:242px;background:#fff"></div><div class="c" style="left:1226px;width:88px;background:#fff"></div><div class="c" style="left:1314px;width:86px;background:#fff"></div><div class="c" style="left:1400px;width:83px;background:#fff"></div><div class="c" style="left:1483px;width:110px;background:#fff"></div><div class="c" style="left:1593px;width:59px;background:#fff"></div>
<div class="cb" style="left:13px;top:19.0px"></div>
<div class="tt " style="left:55px;top:18.0px"><span style="font-size:14.5px">206190</span></div>
<div class="tt " style="left:121px;top:18.0px"><span style="font-size:14.5px">5118</span></div>
<div class="tt " style="left:171px;top:18.0px"><span style="font-size:14.5px">TY8QrBygiux9mBQXjTaEv7VvPPcoAwckon</span></div>
<div class="tt lt" style="left:468px;top:8.0px">系统分配,等级更新,充值,提币,提币(手续费),提币(退还),预约,预约(退<br>还),创投结算,分享奖励,领导奖励,<span style="font-size:14.5px">USDT</span>(冻结)赠送,<span style="font-size:14.5px">USDT</span>(冻结)释放</div>
<div class="tt red" style="left:903px;top:18.0px">-<span style="font-size:14.5px">36630.50</span></div>
<div class="tt " style="left:992px;top:8.0px">兑换<span style="font-size:14.5px">36630.50USDT</span>到<span style="font-size:14.5px">USDT</span>-<br><span style="font-size:14.5px">36630.5</span></div>
<div class="tt " style="left:1234px;top:18.0px">余额</div>
<div class="tt mag" style="left:1322px;top:18.0px"><span style="font-size:14.5px">36630.50</span></div>
<div class="tt " style="left:1408px;top:18.0px"><span style="font-size:14.5px">20220116</span></div>
<div class="tt dt" style="left:1491px;top:8.0px"><span style="font-size:14.5px">2022-01-16</span><br><span style="font-size:14.5px">02:05</span></div>
</div>
<div class="row" style="top:494px;height:57px"><div class="c" style="left:0px;width:47px;background:#f8f8f8"></div><div class="c" style="left:47px;width:66px;background:#f8f8f8"></div><div class="c" style="left:113px;width:50px;background:#f8f8f8"></div><div class="c" style="left:163px;width:297px;background:#f8f8f8"></div><div class="c" style="left:460px;width:435px;background:#f8f8f8"></div><div class="c" style="left:895px;width:89px;background:#f8f8f8"></div><div class="c" style="left:984px;width:242px;background:#f8f8f8"></div><div class="c" style="left:1226px;width:88px;background:#f8f8f8"></div><div class="c" style="left:1314px;width:86px;background:#f8f8f8"></div><div class="c" style="left:1400px;width:83px;background:#f8f8f8"></div><div class="c" style="left:1483px;width:110px;background:#f8f8f8"></div><div class="c" style="left:1593px;width:59px;background:#f8f8f8"></div>
<div class="cb" style="left:13px;top:19.0px"></div>
<div class="tt " style="left:55px;top:18.0px"><span style="font-size:14.5px">206189</span></div>
<div class="tt " style="left:121px;top:18.0px"><span style="font-size:14.5px">5118</span></div>
<div class="tt " style="left:171px;top:18.0px"><span style="font-size:14.5px">TY8QrBygiux9mBQXjTaEv7VvPPcoAwckon</span></div>
<div class="tt " style="left:468px;top:18.0px">系统分配</div>
<div class="tt blue" style="left:903px;top:18.0px">+<span style="font-size:14.5px">111.00</span></div>
<div class="tt " style="left:992px;top:18.0px">矿机真加</div>
<div class="tt " style="left:1234px;top:18.0px">余额</div>
<div class="tt mag" style="left:1322px;top:18.0px"><span style="font-size:14.5px">36630.50</span></div>
<div class="tt " style="left:1408px;top:18.0px"><span style="font-size:14.5px">20211213</span></div>
<div class="tt dt" style="left:1491px;top:8.0px"><span style="font-size:14.5px">2021-12-13</span><br><span style="font-size:14.5px">15:27</span></div>
<div class="tt " style="left:1601px;top:18.0px"><span style="font-size:14.5px">admin</span></div>
</div>
<div class="row" style="top:551px;height:57px"><div class="c" style="left:0px;width:47px;background:#fff"></div><div class="c" style="left:47px;width:66px;background:#fff"></div><div class="c" style="left:113px;width:50px;background:#fff"></div><div class="c" style="left:163px;width:297px;background:#fff"></div><div class="c" style="left:460px;width:435px;background:#fff"></div><div class="c" style="left:895px;width:89px;background:#fff"></div><div class="c" style="left:984px;width:242px;background:#fff"></div><div class="c" style="left:1226px;width:88px;background:#fff"></div><div class="c" style="left:1314px;width:86px;background:#fff"></div><div class="c" style="left:1400px;width:83px;background:#fff"></div><div class="c" style="left:1483px;width:110px;background:#fff"></div><div class="c" style="left:1593px;width:59px;background:#fff"></div>
<div class="cb" style="left:13px;top:19.0px"></div>
<div class="tt " style="left:55px;top:18.0px"><span style="font-size:14.5px">206188</span></div>
<div class="tt " style="left:121px;top:18.0px"><span style="font-size:14.5px">5118</span></div>
<div class="tt " style="left:171px;top:18.0px"><span style="font-size:14.5px">TY8QrBygiux9mBQXjTaEv7VvPPcoAwckon</span></div>
<div class="tt lt" style="left:468px;top:8.0px">系统分配,等级更新,充值,提币,提币(手续费),提币(退还),预约,预约(退<br>还),创投结算,分享奖励,领导奖励,<span style="font-size:14.5px">USDT</span>(冻结)赠送,<span style="font-size:14.5px">USDT</span>(冻结)释放</div>
<div class="tt red" style="left:903px;top:18.0px">-<span style="font-size:14.5px">12173.00</span></div>
<div class="tt " style="left:992px;top:18.0px">金额变动</div>
<div class="tt " style="left:1234px;top:8.0px">余额,余额<br>(冻结)</div>
<div class="tt mag" style="left:1322px;top:18.0px"><span style="font-size:14.5px">5118.00</span></div>
<div class="tt " style="left:1408px;top:18.0px"><span style="font-size:14.5px">20211213</span></div>
<div class="tt dt" style="left:1491px;top:8.0px"><span style="font-size:14.5px">2021-12-13</span><br><span style="font-size:14.5px">15:15</span></div>
</div>
<div class="row" style="top:608px;height:57px"><div class="c" style="left:0px;width:47px;background:#f8f8f8"></div><div class="c" style="left:47px;width:66px;background:#f8f8f8"></div><div class="c" style="left:113px;width:50px;background:#f8f8f8"></div><div class="c" style="left:163px;width:297px;background:#f8f8f8"></div><div class="c" style="left:460px;width:435px;background:#f8f8f8"></div><div class="c" style="left:895px;width:89px;background:#f8f8f8"></div><div class="c" style="left:984px;width:242px;background:#f8f8f8"></div><div class="c" style="left:1226px;width:88px;background:#f8f8f8"></div><div class="c" style="left:1314px;width:86px;background:#f8f8f8"></div><div class="c" style="left:1400px;width:83px;background:#f8f8f8"></div><div class="c" style="left:1483px;width:110px;background:#f8f8f8"></div><div class="c" style="left:1593px;width:59px;background:#f8f8f8"></div>
<div class="cb" style="left:13px;top:19.0px"></div>
<div class="tt " style="left:55px;top:18.0px"><span style="font-size:14.5px">206187</span></div>
<div class="tt " style="left:121px;top:18.0px"><span style="font-size:14.5px">5118</span></div>
<div class="tt " style="left:171px;top:18.0px"><span style="font-size:14.5px">TY8QrBygiux9mBQXjTaEv7VvPPcoAwckon</span></div>
<div class="tt lt" style="left:468px;top:8.0px">系统分配,等级更新,充值,提币,提币(手续费),提币(退还),预约,预约(退<br>还),创投结算,分享奖励,领导奖励,<span style="font-size:14.5px">USDT</span>(冻结)赠送,<span style="font-size:14.5px">USDT</span>(冻结)释放</div>
<div class="tt red" style="left:903px;top:18.0px">-<span style="font-size:14.5px">1.00</span></div>
<div class="tt " style="left:992px;top:18.0px">金额变动</div>
<div class="tt " style="left:1234px;top:8.0px">余额,余额<br>(冻结)</div>
<div class="tt mag" style="left:1322px;top:18.0px"><span style="font-size:14.5px">5118.00</span></div>
<div class="tt " style="left:1408px;top:18.0px"><span style="font-size:14.5px">20211213</span></div>
<div class="tt dt" style="left:1491px;top:8.0px"><span style="font-size:14.5px">2021-12-13</span><br><span style="font-size:14.5px">15:14</span></div>
</div>
<div class="row" style="top:665px;height:57px"><div class="c" style="left:0px;width:47px;background:#fff"></div><div class="c" style="left:47px;width:66px;background:#fff"></div><div class="c" style="left:113px;width:50px;background:#fff"></div><div class="c" style="left:163px;width:297px;background:#fff"></div><div class="c" style="left:460px;width:435px;background:#fff"></div><div class="c" style="left:895px;width:89px;background:#fff"></div><div class="c" style="left:984px;width:242px;background:#fff"></div><div class="c" style="left:1226px;width:88px;background:#fff"></div><div class="c" style="left:1314px;width:86px;background:#fff"></div><div class="c" style="left:1400px;width:83px;background:#fff"></div><div class="c" style="left:1483px;width:110px;background:#fff"></div><div class="c" style="left:1593px;width:59px;background:#fff"></div>
<div class="cb" style="left:13px;top:19.0px"></div>
<div class="tt " style="left:55px;top:18.0px"><span style="font-size:14.5px">206186</span></div>
<div class="tt " style="left:121px;top:18.0px"><span style="font-size:14.5px">5118</span></div>
<div class="tt " style="left:171px;top:18.0px"><span style="font-size:14.5px">TY8QrBygiux9mBQXjTaEv7VvPPcoAwckon</span></div>
<div class="tt lt" style="left:468px;top:8.0px">系统分配,等级更新,充值,提币,提币(手续费),提币(退还),预约,预约(退<br>还),创投结算,分享奖励,领导奖励,<span style="font-size:14.5px">USDT</span>(冻结)赠送,<span style="font-size:14.5px">USDT</span>(冻结)释放</div>
<div class="tt red" style="left:903px;top:18.0px">-<span style="font-size:14.5px">100.00</span></div>
<div class="tt " style="left:992px;top:18.0px">金额变动</div>
<div class="tt " style="left:1234px;top:8.0px">余额,余额<br>(冻结)</div>
<div class="tt mag" style="left:1322px;top:18.0px"><span style="font-size:14.5px">5118.00</span></div>
<div class="tt " style="left:1408px;top:18.0px"><span style="font-size:14.5px">20211213</span></div>
<div class="tt dt" style="left:1491px;top:8.0px"><span style="font-size:14.5px">2021-12-13</span><br><span style="font-size:14.5px">15:12</span></div>
</div>
<div class="row" style="top:722px;height:57px"><div class="c" style="left:0px;width:47px;background:#f8f8f8"></div><div class="c" style="left:47px;width:66px;background:#f8f8f8"></div><div class="c" style="left:113px;width:50px;background:#f8f8f8"></div><div class="c" style="left:163px;width:297px;background:#f8f8f8"></div><div class="c" style="left:460px;width:435px;background:#f8f8f8"></div><div class="c" style="left:895px;width:89px;background:#f8f8f8"></div><div class="c" style="left:984px;width:242px;background:#f8f8f8"></div><div class="c" style="left:1226px;width:88px;background:#f8f8f8"></div><div class="c" style="left:1314px;width:86px;background:#f8f8f8"></div><div class="c" style="left:1400px;width:83px;background:#f8f8f8"></div><div class="c" style="left:1483px;width:110px;background:#f8f8f8"></div><div class="c" style="left:1593px;width:59px;background:#f8f8f8"></div>
<div class="cb" style="left:13px;top:19.0px"></div>
<div class="tt " style="left:55px;top:18.0px"><span style="font-size:14.5px">206185</span></div>
<div class="tt " style="left:121px;top:18.0px"><span style="font-size:14.5px">5118</span></div>
<div class="tt " style="left:171px;top:18.0px"><span style="font-size:14.5px">TY8QrBygiux9mBQXjTaEv7VvPPcoAwckon</span></div>
<div class="tt lt" style="left:468px;top:8.0px">系统分配,等级更新,充值,提币,提币(手续费),提币(退还),预约,预约(退<br>还),创投结算,分享奖励,领导奖励,<span style="font-size:14.5px">USDT</span>(冻结)赠送,<span style="font-size:14.5px">USDT</span>(冻结)释放</div>
<div class="tt red" style="left:903px;top:18.0px">-<span style="font-size:14.5px">100.00</span></div>
<div class="tt " style="left:992px;top:18.0px">金额变动</div>
<div class="tt " style="left:1234px;top:8.0px">余额,余额<br>(冻结)</div>
<div class="tt mag" style="left:1322px;top:18.0px"><span style="font-size:14.5px">5118.00</span></div>
<div class="tt " style="left:1408px;top:18.0px"><span style="font-size:14.5px">20211213</span></div>
<div class="tt dt" style="left:1491px;top:8.0px"><span style="font-size:14.5px">2021-12-13</span><br><span style="font-size:14.5px">15:10</span></div>
</div>
</div>
<div id="ms"></div>
<div class="abs" style="left:1907.5px;top:99px;width:1.5px;height:1.2px;background:#606060"></div>
<div class="abs" style="left:1905px;top:106px;width:4px;height:500px;background:#c1c1c1"></div>
<div id="foot"></div>
<div class="t ft" style="left:226px;top:918px">后台管理系统 版权所有 © <span style="font-size:13px">2018-2022</span></div>
<div class="t ft" style="right:15px;top:918px"><span style="font-size:13px">Powered By</span> 后台管理系统</div>
</body></html>
